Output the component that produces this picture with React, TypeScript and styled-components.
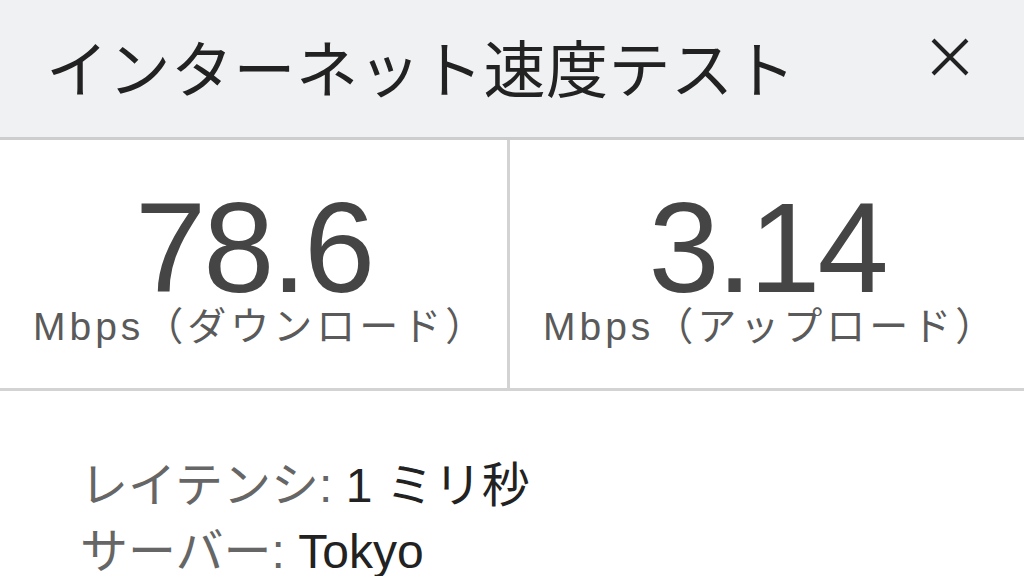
import React from "react";
import styled, { createGlobalStyle } from "styled-components";

const GlobalStyle = createGlobalStyle`
  html, body {
    margin: 0;
    padding: 0;
    background: #ffffff;
  }
  body {
    font-family: "Liberation Sans", "Noto Sans CJK JP", sans-serif;
    overflow: hidden;
  }
`;

const Page = styled.div`
  width: 1024px;
  height: 576px;
  overflow: hidden;
  display: flex;
  flex-direction: column;
`;

const Header = styled.header`
  height: 137px;
  flex-shrink: 0;
  background-color: #f0f1f3;
  border-bottom: 3px solid #cdcdcd;
  display: flex;
  align-items: center;
  justify-content: space-between;
  padding: 0 54px 0 46px;
  box-sizing: content-box;
`;

const Title = styled.h1`
  margin: 0 0 5px;
  font-family: "Noto Sans CJK JP", sans-serif;
  font-weight: 400;
  font-size: 62px;
  line-height: 1;
  letter-spacing: 0.5px;
  color: #222222;
`;

const CloseButton = styled.button`
  align-self: flex-start;
  margin-top: 38px;
  width: 40px;
  height: 38px;
  padding: 0;
  border: none;
  background: none;
  display: flex;
  align-items: center;
  justify-content: center;
  cursor: pointer;
`;

const Stats = styled.section`
  height: 248px;
  flex-shrink: 0;
  display: grid;
  grid-template-columns: 510px 1fr;
  border-bottom: 3px solid #d3d3d3;
`;

const StatCell = styled.div<{ $divider?: boolean }>`
  display: flex;
  flex-direction: column;
  align-items: center;
  padding-top: 49px;
  border-right: ${(p) => (p.$divider ? "3px solid #d3d3d3" : "none")};
`;

const Value = styled.div`
  font-family: "Liberation Sans", sans-serif;
  font-size: 128px;
  line-height: 118px;
  letter-spacing: -3px;
  color: #454545;
`;

const Unit = styled.div`
  align-self: stretch;
  padding-left: 33px;
  white-space: nowrap;
  font-family: "Liberation Sans", "Noto Sans CJK JP", sans-serif;
  font-size: 39px;
  line-height: 39px;
  letter-spacing: 4px;
  color: #5a5a5a;
`;

const Details = styled.section`
  padding: 62px 0 0 80px;
  display: flex;
  flex-direction: column;
`;

const DetailRow = styled.div`
  font-size: 48px;
  line-height: 66px;
  white-space: nowrap;
`;

const DetailLabel = styled.span`
  color: #666666;
`;

const DetailValue = styled.span`
  color: #222222;
`;

function CloseIcon(): JSX.Element {
  return (
    <svg width="40" height="38" viewBox="0 0 40 38" fill="none">
      <path
        d="M3 2 L37 36 M37 2 L3 36"
        stroke="#222222"
        strokeWidth="4"
        strokeLinecap="butt"
      />
    </svg>
  );
}

function App(): JSX.Element {
  return (
    <Page>
      <GlobalStyle />
      <Header>
        <Title>インターネット速度テスト</Title>
        <CloseButton type="button" aria-label="閉じる">
          <CloseIcon />
        </CloseButton>
      </Header>
      <Stats>
        <StatCell $divider>
          <Value>78.6</Value>
          <Unit>Mbps（ダウンロード）</Unit>
        </StatCell>
        <StatCell>
          <Value>3.14</Value>
          <Unit>Mbps（アップロード）</Unit>
        </StatCell>
      </Stats>
      <Details>
        <DetailRow>
          <DetailLabel>レイテンシ: </DetailLabel>
          <DetailValue>1 ミリ秒</DetailValue>
        </DetailRow>
        <DetailRow>
          <DetailLabel>サーバー: </DetailLabel>
          <DetailValue>Tokyo</DetailValue>
        </DetailRow>
      </Details>
    </Page>
  );
}

export default App;
